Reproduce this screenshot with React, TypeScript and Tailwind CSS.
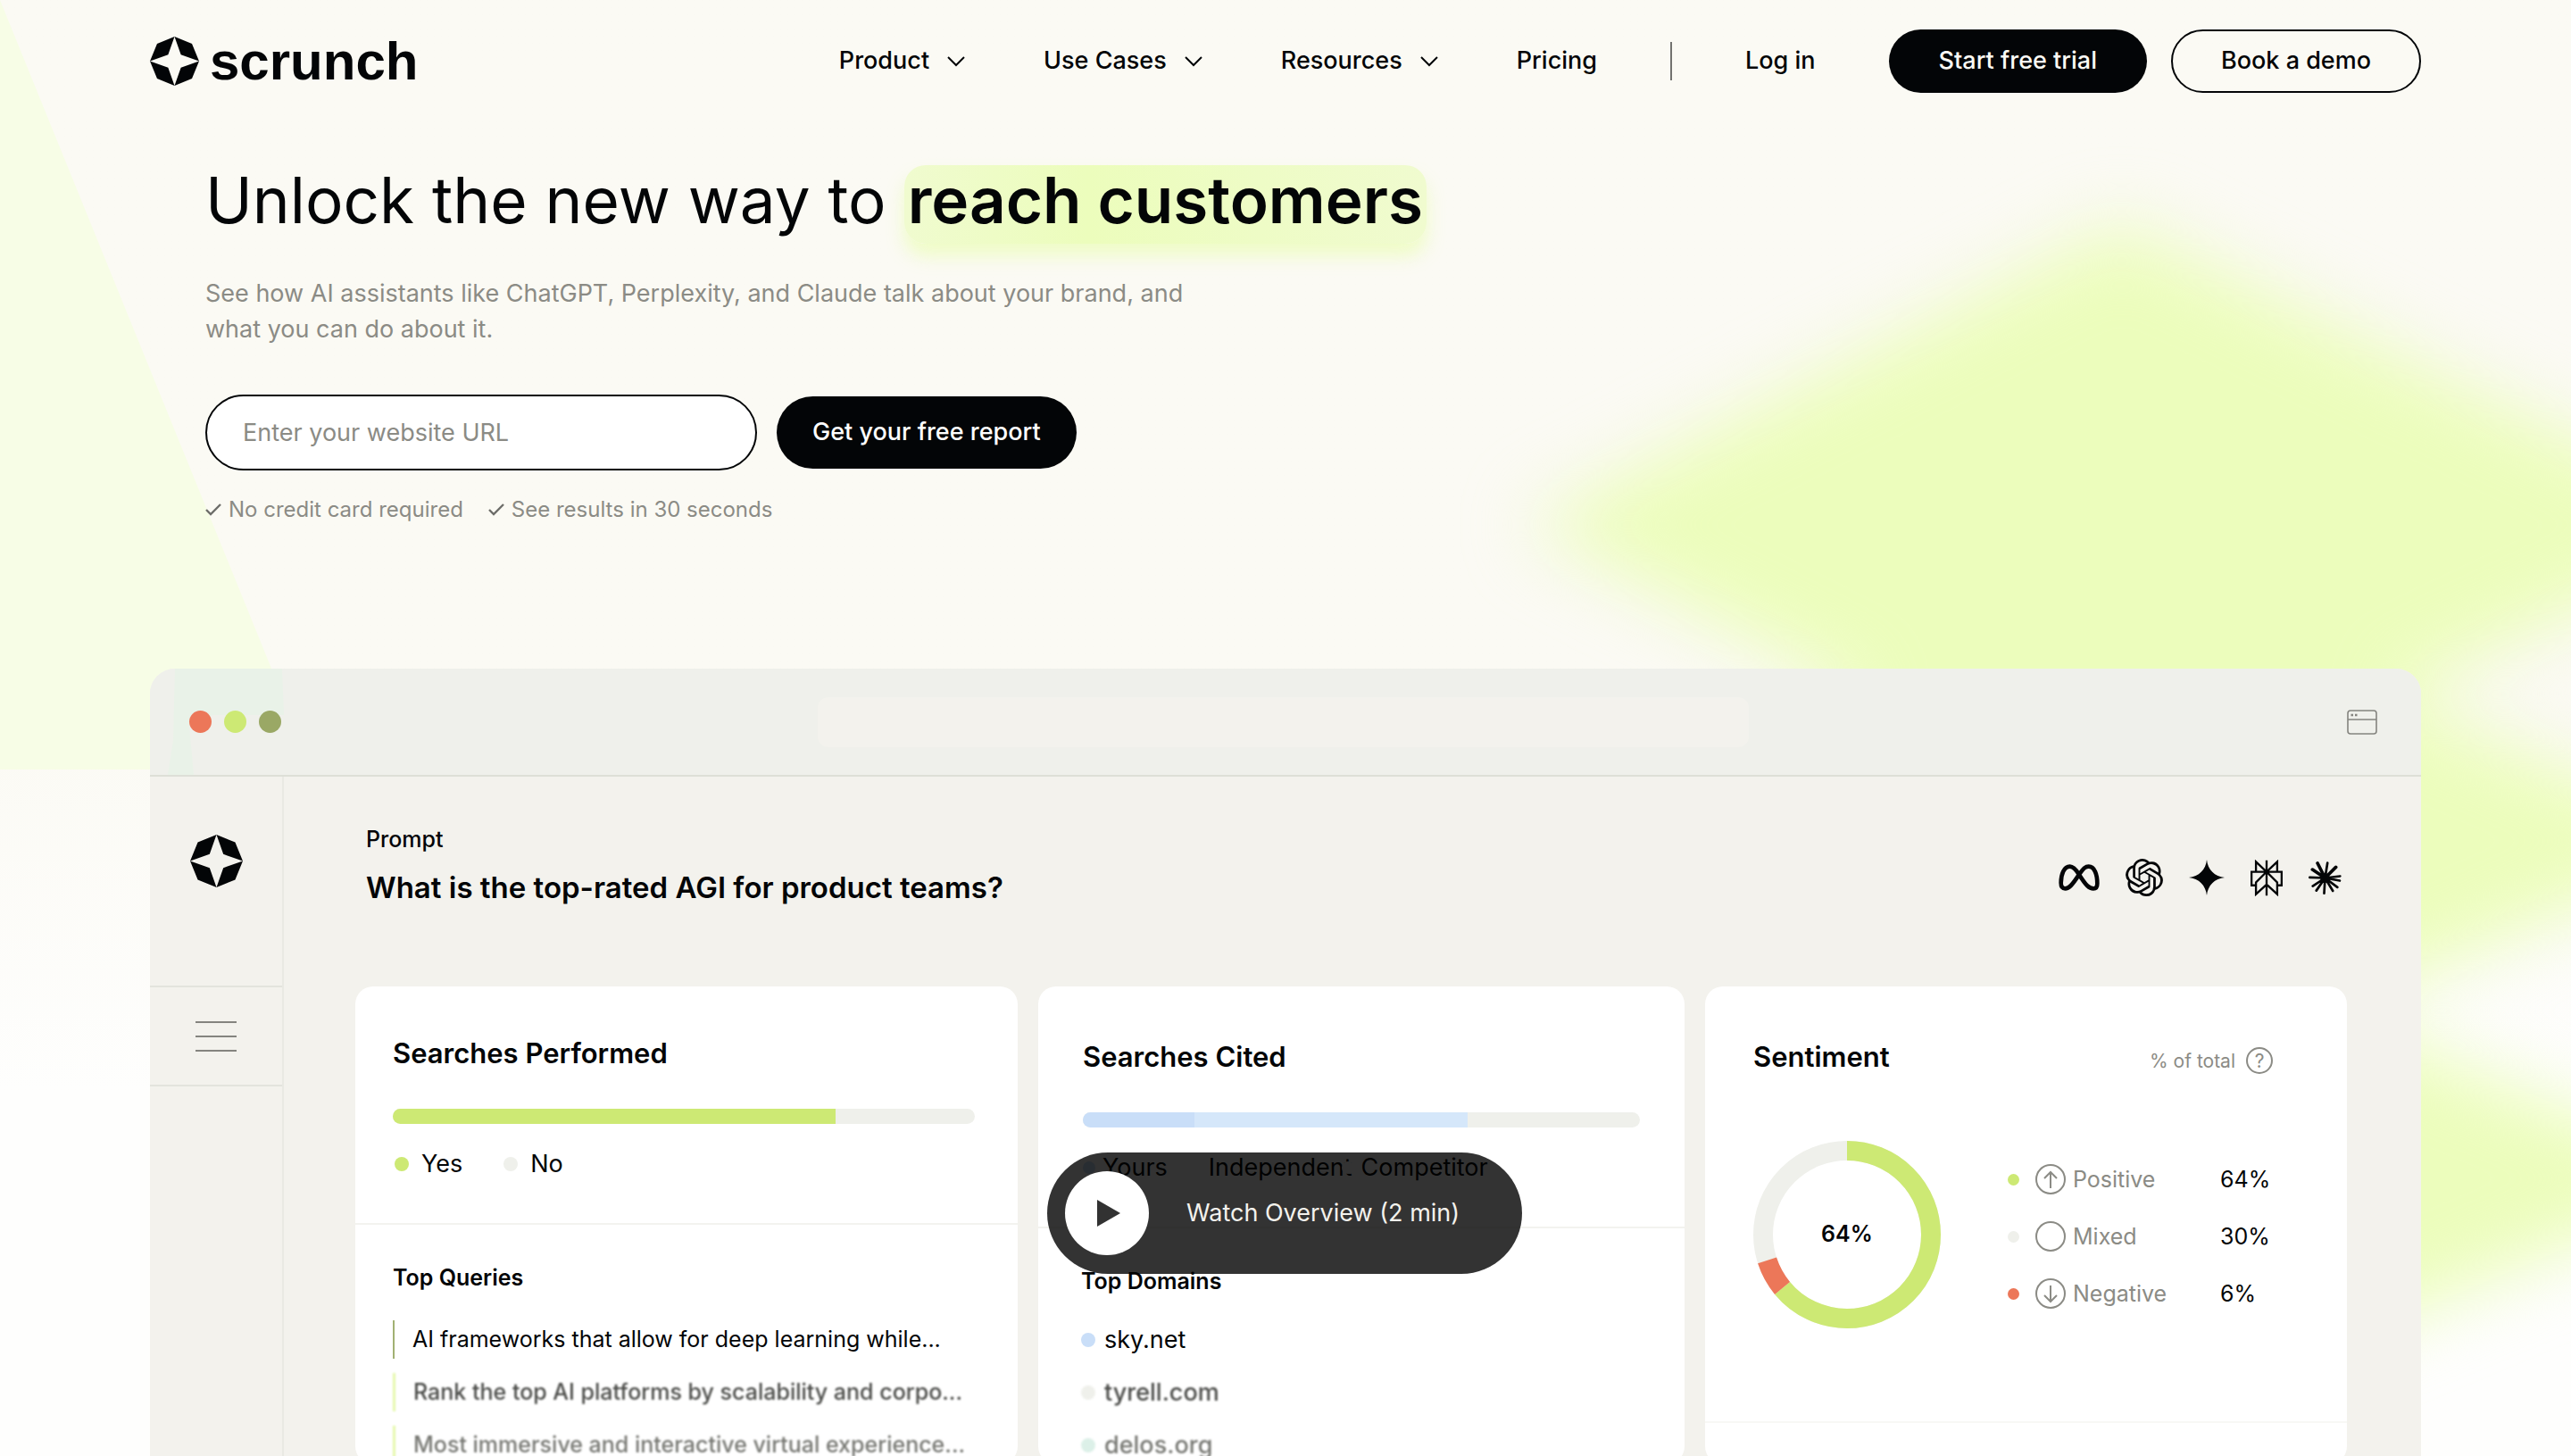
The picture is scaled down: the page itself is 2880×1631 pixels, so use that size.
import { SiOpenai } from "react-icons/si";

const menus = ["Product", "Use Cases", "Resources"];

const queries = [
  "AI frameworks that allow for deep learning while...",
  "Rank the top AI platforms by scalability and corpo...",
  "Most immersive and interactive virtual experience...",
];

const domains = [
  { name: "sky.net", dot: "bg-[#c9def8]" },
  { name: "tyrell.com", dot: "bg-[#eff0eb]" },
  { name: "delos.org", dot: "bg-[#dcf0e8]" },
];

const sentiments = [
  { label: "Positive", value: 64, dot: "bg-[#cde974]", arrow: "M17 27V9M10 16l7-7 7 7" },
  { label: "Mixed", value: 30, dot: "bg-[#eff0eb]", arrow: "" },
  { label: "Negative", value: 6, dot: "bg-[#ec7759]", arrow: "M17 8v18M10 19l7 7 7-7" },
];

const LogoMark = ({ className }: { className: string }) => (
  <svg viewBox="0 0 100 100" fill="#030507" className={className} aria-hidden="true">
    <path
      fillRule="evenodd"
      d="M50 0 85.5 14.5 100 50 85.5 85.5 50 100 14.5 85.5 0 50 14.5 14.5ZM50 0 37 37 0 50 37 63 50 100 63 63 100 50 63 37Z"
    />
  </svg>
);

const Chevron = () => (
  <svg viewBox="0 0 20 12" className="h-3 w-5" fill="none" stroke="currentColor" strokeWidth="2" aria-hidden="true">
    <path d="M1 1l9 9 9-9" />
  </svg>
);

const Check = () => (
  <svg viewBox="0 0 18 14" className="h-[14px] w-[18px]" fill="none" stroke="#6d6d69" strokeWidth="2.4" aria-hidden="true">
    <path d="M1 7l5 5L17 1" />
  </svg>
);

const Background = () => (
  <div className="pointer-events-none absolute inset-0 -z-10 overflow-hidden bg-linear-to-b from-[#fbfaf4] from-50% to-[#fefefd] to-75%">
    <svg className="absolute top-0 left-0 h-[862px] w-[350px]" viewBox="0 0 350 862" aria-hidden="true">
      <path d="M0 0 350 862H0Z" fill="#f7fde6" />
    </svg>
    <svg className="absolute top-0 right-0 h-[1631px] w-[1240px] overflow-visible" viewBox="0 0 1240 1631" aria-hidden="true">
      <g fill="#ecfdbc" className="blur-[40px]">
        <path d="M70 588 735 250 1450 588 735 926Z" />
        <path d="M90 942 739 650 1420 942 739 1234Z" />
        <path d="M90 1320 739 1034 1420 1320 739 1606Z" />
      </g>
    </svg>
  </div>
);

const Header = () => (
  <header className="flex items-center justify-between px-42 pt-[33px]">
    <a href="#" className="flex items-center gap-3">
      <LogoMark className="size-[55px]" />
      <span className="font-['Liberation_Sans',sans-serif] text-[60px] leading-[52px] font-bold">scrunch</span>
    </a>
    <nav className="flex items-center gap-[82px] text-[27px] font-medium">
      <div className="flex items-center gap-[88px]">
        {menus.map((menu) => (
          <button key={menu} className="flex items-center gap-5">
            {menu}
            <Chevron />
          </button>
        ))}
        <a href="#pricing">Pricing</a>
      </div>
      <div className="h-[43px] w-[2px] bg-[#72726f]" />
      <a href="#login">Log in</a>
      <div className="flex gap-[27px]">
        <a
          href="#trial"
          className="flex h-[71px] items-center rounded-full bg-[#030507] px-14 text-[#fbfaf4]"
        >
          Start free trial
        </a>
        <a href="#demo" className="flex h-[71px] items-center rounded-full border-2 border-[#030507] px-[54px]">
          Book a demo
        </a>
      </div>
    </nav>
  </header>
);

const Hero = () => (
  <section className="px-[230px] pt-[81px]">
    <h1 className="text-[71px] leading-[78px]">
      Unlock the new way to{" "}
      <span className="inline-block rounded-3xl bg-linear-to-r from-[#f0fbcf] via-[#ecfdbc] via-35% to-[#f0fbcf] px-1 pb-[10px] font-semibold shadow-[0_14px_20px_rgba(236,253,188,0.8)]">
        reach customers
      </span>
    </h1>
    <p className="mt-9 max-w-[1110px] text-[27px] leading-10 text-[#8b8b85]">
      See how AI assistants like ChatGPT, Perplexity, and Claude talk about your brand, and what you can do about
      it.
    </p>
    <form className="mt-[53px] flex items-center gap-[22px]" onSubmit={(e) => e.preventDefault()}>
      <input
        type="text"
        aria-label="Website URL"
        placeholder="Enter your website URL"
        className="h-[85px] w-[618px] rounded-full border-2 border-[#030507] bg-white px-10 text-[27px] placeholder:text-[#8b8b85]"
      />
      <button className="h-[81px] rounded-full bg-[#030507] px-10 text-[27px] font-medium text-white">
        Get your free report
      </button>
    </form>
    <ul className="mt-7 flex gap-7 text-2xl text-[#8b8b85]">
      <li className="flex items-center gap-2">
        <Check />
        No credit card required
      </li>
      <li className="flex items-center gap-2">
        <Check />
        See results in 30 seconds
      </li>
    </ul>
  </section>
);

const AssistantIcons = () => (
  <div className="flex items-center gap-[29px] pb-3">
    <svg viewBox="49 83 138 90" className="h-[30px] w-[46px]" fill="none" stroke="#030507" strokeWidth="14" role="img" aria-label="Meta">
      <path d="M118 118C106 99 98 91 87 91 67 91 57 118 57 146 57 159 61 165 71 165 84 165 94 154 118 118 134 95 140 91 150 91 170 91 179 118 179 148 179 159 175 165 166 165 152 165 142 156 118 118Z" />
    </svg>
    <SiOpenai className="size-[42px] text-[#030507]" aria-label="OpenAI" />
    <svg viewBox="0 0 40 40" className="size-10" fill="#030507" role="img" aria-label="Gemini">
      <path d="M20 0C21 11 29 19 40 20 29 21 21 29 20 40 19 29 11 21 0 20 11 19 19 11 20 0Z" />
    </svg>
    <svg viewBox="689 66 108 124" className="h-[41px] w-[36px]" fill="none" stroke="#030507" strokeWidth="7" role="img" aria-label="Perplexity">
      <path d="M743 68V188M743 107 707 73V107M743 107 779 73V107M707 153H692V107H794V153H779M743 107 707 143V183L743 150 779 183V143Z" />
    </svg>
    <svg viewBox="888 73 110 110" className="size-[37px]" stroke="#030507" strokeLinecap="round" role="img" aria-label="Claude">
      <g strokeWidth="11">
        <path d="M943 128 918 79M943 128 979 92M943 128 901 100" />
      </g>
      <g strokeWidth="8">
        <path d="M943 128 951 78M943 128 993 122M943 128 992 137M943 128 984 159M943 128 969 171M943 128 940 179M943 128 914 170M943 128 902 155M943 128 892 126" />
      </g>
      <circle cx="943" cy="128" r="16" fill="#030507" stroke="none" />
    </svg>
  </div>
);

const PerformedCard = () => (
  <section className="rounded-[20px] bg-white">
    <div className="border-b-2 border-[#f3f3ef] pt-[55px] pr-12 pb-[50px] pl-[42px]">
      <h3 className="text-[31px] leading-10 font-semibold">Searches Performed</h3>
      <div className="mt-[42px] h-[17px] overflow-hidden rounded-full bg-[#eff0eb]">
        <div className="h-full w-[76%] bg-[#cde974]" />
      </div>
      <ul className="mt-[29px] flex gap-[46px] pl-[2px] text-[27px] leading-8">
        <li className="flex items-center gap-[14px]">
          <span className="size-4 rounded-full bg-[#cde974]" />
          Yes
        </li>
        <li className="flex items-center gap-[14px]">
          <span className="size-4 rounded-full bg-[#eff0eb]" />
          No
        </li>
      </ul>
    </div>
    <div className="pt-[43px] pr-12 pl-[42px]">
      <h4 className="text-[25px] leading-8 font-semibold">Top Queries</h4>
      <ul className="mt-8 flex flex-col gap-4 text-[25px] leading-[43px] whitespace-nowrap">
        {queries.map((query, i) => (
          <li
            key={query}
            className={
              i === 0
                ? "border-l-2 border-[#a2b173] pl-5"
                : i === 1
                  ? "border-l-3 border-[#e6f8ae] pl-5 font-medium text-[#4b4c49] blur-[1px]"
                  : "border-l-3 border-[#e6f8ae] pl-5 font-medium text-[#777873] blur-[1px]"
            }
          >
            {query}
          </li>
        ))}
      </ul>
    </div>
  </section>
);

const CitedCard = () => (
  <section className="relative rounded-[20px] bg-white">
    <div className="border-b-2 border-[#f3f3ef] px-[50px] pt-[59px] pb-[50px]">
      <h3 className="text-[31px] leading-10 font-semibold">Searches Cited</h3>
      <div className="mt-[42px] flex h-[17px] overflow-hidden rounded-full bg-[#eff0eb]">
        <div className="w-[20%] bg-[#c9def8]" />
        <div className="w-[49%] bg-[#d5e7fa]" />
      </div>
      <ul className="mt-[29px] flex gap-6 text-[27px] leading-8">
        <li className="flex items-center gap-2">
          <span className="size-[14px] rounded-full bg-[#c9def8]" />
          Yours
        </li>
        <li className="flex items-center gap-2">
          <span className="size-[14px] rounded-full" />
          Independent
        </li>
        <li className="relative -ml-9 flex items-center gap-2">
          <span className="size-[14px] rounded-full bg-white" />
          Competitor
        </li>
      </ul>
    </div>
    <div className="px-12 pt-[43px]">
      <h4 className="text-[25px] leading-8 font-semibold">Top Domains</h4>
      <ul className="mt-7 flex flex-col gap-4 text-[27px] leading-[43px]">
        {domains.map(({ name, dot }, i) => (
          <li
            key={name}
            className={
              i === 0
                ? "flex items-center gap-[10px]"
                : i === 1
                  ? "flex items-center gap-[10px] font-medium text-[#4b4c49] blur-[1px]"
                  : "flex items-center gap-[10px] font-medium text-[#777873] blur-[1px]"
            }
          >
            <span className={`size-4 rounded-full ${dot}`} />
            {name}
          </li>
        ))}
      </ul>
    </div>
    <button className="absolute top-[186px] left-[10px] flex h-[136px] items-center gap-[42px] rounded-full bg-black/80 pr-[70px] pl-5 text-[27px] whitespace-nowrap text-[#f3f2ed]">
      <span className="flex size-[94px] items-center justify-center rounded-full bg-white">
        <svg viewBox="0 0 26 30" className="ml-1 h-[30px] w-[26px]" fill="#323232" aria-hidden="true">
          <path d="M0 0 26 15 0 30Z" />
        </svg>
      </span>
      Watch Overview (2 min)
    </button>
  </section>
);

const SentimentCard = () => (
  <section className="rounded-[20px] bg-white">
    <div className="border-b-2 border-[#f8f8f5] pt-[59px] pr-[83px] pb-[104px] pl-[54px]">
      <div className="flex items-end justify-between">
        <h3 className="text-[31px] leading-10 font-semibold">Sentiment</h3>
        <span className="flex items-center gap-3 text-[21px] text-[#8b8b85]">
          % of total
          <span className="flex size-[30px] items-center justify-center rounded-full border-2 border-[#8b8b85]">?</span>
        </span>
      </div>
      <div className="mt-[74px] flex items-center gap-[75px]">
        <div className="relative size-[210px]">
          <svg viewBox="0 0 210 210" fill="none" strokeWidth="22" className="-rotate-90" aria-hidden="true">
            <circle cx="105" cy="105" r="94" stroke="#eff0eb" />
            <circle cx="105" cy="105" r="94" stroke="#cde974" pathLength="100" strokeDasharray="64 36" />
            <circle
              cx="105"
              cy="105"
              r="94"
              stroke="#ec7759"
              pathLength="100"
              strokeDasharray="6 94"
              strokeDashoffset="-64"
            />
          </svg>
          <span className="absolute inset-0 flex items-center justify-center text-[25px] font-semibold">64%</span>
        </div>
        <ul className="flex flex-col gap-[30px] pt-1 text-[25px] leading-[34px]">
          {sentiments.map(({ label, value, dot, arrow }) => (
            <li key={label} className="flex items-center">
              <span className={`mr-[18px] size-[13px] rounded-full ${dot}`} />
              <svg viewBox="0 0 34 34" className="mr-2 size-[34px]" fill="none" stroke="#8b8b85" strokeWidth="2" aria-hidden="true">
                <circle cx="17" cy="17" r="16" />
                <path d={arrow} />
              </svg>
              <span className="w-[165px] text-[#8b8b85]">{label}</span>
              <span>{value}%</span>
            </li>
          ))}
        </ul>
      </div>
    </div>
  </section>
);

const BrowserWindow = () => (
  <section className="mx-42 mt-[162px] flex min-h-0 flex-1 flex-col overflow-hidden rounded-t-[28px] bg-[#f3f2ed]">
    <div className="relative grid h-[121px] shrink-0 grid-cols-[27fr_40fr_27fr] items-center border-b-2 border-[#dddfd7] bg-[#eff0eb] pr-[49px] pl-11">
      <svg viewBox="0 0 150 119" className="absolute top-0 left-0 h-[119px] w-[150px]" fill="#e9f2e8" aria-hidden="true">
        <path d="M28 0H148L150 52H70L44 64 49 119H20L26 80Z" />
      </svg>
      <div className="relative flex gap-[14px]">
        <span className="size-[25px] rounded-full bg-[#ec7759]" />
        <span className="size-[25px] rounded-full bg-[#cde974]" />
        <span className="size-[25px] rounded-full bg-[#9aa865]" />
      </div>
      <div className="h-14 rounded-xl bg-[#f3f2ed]" />
      <svg viewBox="0 0 34 28" className="h-7 w-[34px] justify-self-end" fill="none" stroke="#84847f" strokeWidth="1.6" aria-hidden="true">
        <rect x="1" y="1" width="32" height="26" rx="3" />
        <path d="M1 11h32" />
        <path d="M4.500 6h2.500M9 6h2.500" strokeWidth="2.600" />
      </svg>
    </div>
    <div className="grid min-h-0 flex-1 grid-cols-[150px_1fr]">
      <aside className="border-r-2 border-[#e9e9e3]">
        <div className="flex h-[236px] justify-center border-b-2 border-[#e3e4dd] pt-[65px]">
          <LogoMark className="size-[59px]" />
        </div>
        <div className="flex h-[111px] items-center justify-center border-b-2 border-[#e3e4dd]">
          <button aria-label="Menu" className="flex w-[46px] flex-col gap-[14px]">
            <span className="h-[2px] bg-[#84847f]" />
            <span className="h-[2px] bg-[#84847f]" />
            <span className="h-[2px] bg-[#84847f]" />
          </button>
        </div>
      </aside>
      <div className="flex min-h-0 flex-col pt-[54px] pr-[83px] pl-20">
        <div className="flex items-end justify-between pr-[6px] pl-3">
          <div>
            <p className="text-[25px] leading-8 font-medium">Prompt</p>
            <h2 className="mt-4 text-[33px] leading-11 font-semibold">What is the top-rated AGI for product teams?</h2>
          </div>
          <AssistantIcons />
        </div>
        <div className="mt-[89px] grid grid-cols-[742fr_724fr_719fr] gap-[23px]">
          <PerformedCard />
          <CitedCard />
          <SentimentCard />
        </div>
      </div>
    </div>
  </section>
);

const App = () => {
  return (
    <main className="relative isolate flex h-screen flex-col overflow-hidden font-[Inter,sans-serif] text-[#030507]">
      <Background />
      <Header />
      <Hero />
      <BrowserWindow />
    </main>
  );
};

export default App;
